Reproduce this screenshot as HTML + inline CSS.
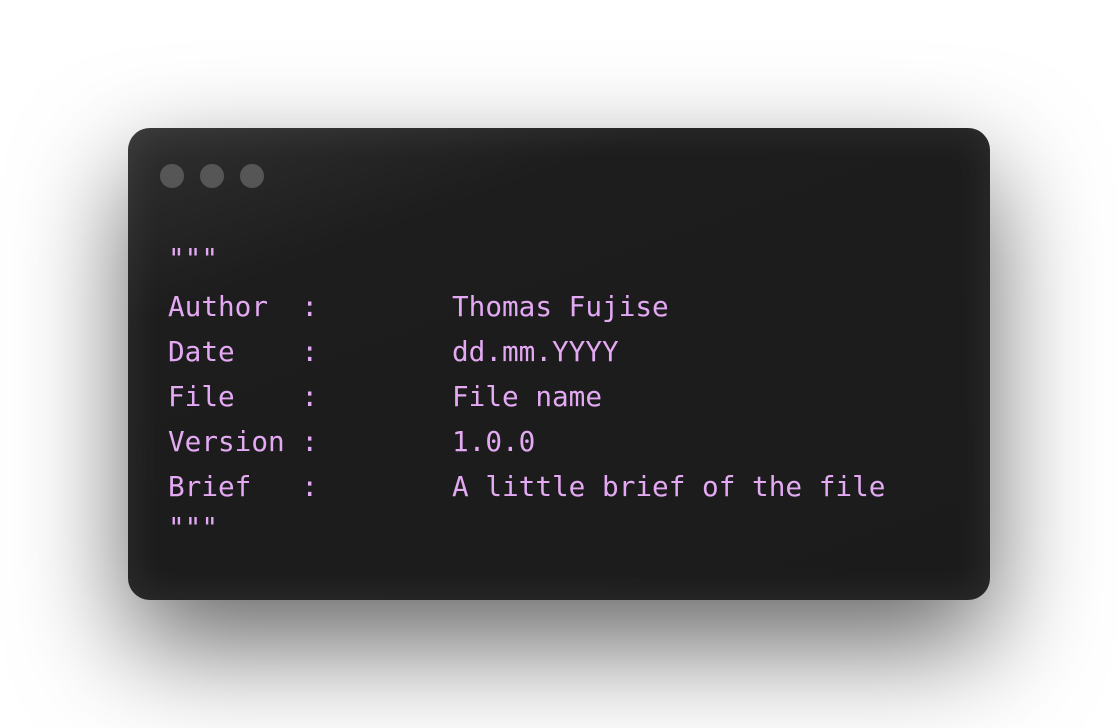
<!DOCTYPE html>
<html><head><style>
html,body{margin:0;padding:0;width:1118px;height:728px;background:#fff;overflow:hidden}
.card{position:absolute;left:128px;top:128px;width:862px;height:472px;border-radius:22px;
background:#1c1c1c;
box-shadow:0 45px 110px rgba(0,0,0,0.6), inset 0 0 40px rgba(255,255,255,0.09);
background-image:linear-gradient(160deg,#303030 0%,#1d1d1d 25%,#1b1b1b 100%);}
.dot{position:absolute;top:36px;width:24px;height:24px;border-radius:50%;background:#565656}
.t{position:absolute;font-family:"DejaVu Sans Mono","Liberation Mono",monospace;font-size:27.7px;line-height:28px;color:#e3a9f3;white-space:pre}
</style></head><body>
<div class="card">
<div class="dot" style="left:32px"></div>
<div class="dot" style="left:72px"></div>
<div class="dot" style="left:112px"></div>
</div>
<div class="t" style="left:168px;top:245px">"""</div>
<div class="t" style="left:168px;top:293px">Author  :</div>
<div class="t" style="left:168px;top:338px">Date    :</div>
<div class="t" style="left:168px;top:383px">File    :</div>
<div class="t" style="left:168px;top:428px">Version :</div>
<div class="t" style="left:168px;top:473px">Brief   :</div>
<div class="t" style="left:452px;top:293px">Thomas Fujise</div>
<div class="t" style="left:452px;top:338px">dd.mm.YYYY</div>
<div class="t" style="left:452px;top:383px">File name</div>
<div class="t" style="left:452px;top:428px">1.0.0</div>
<div class="t" style="left:452px;top:473px">A little brief of the file</div>
<div class="t" style="left:168px;top:514px">"""</div>
</body></html>
